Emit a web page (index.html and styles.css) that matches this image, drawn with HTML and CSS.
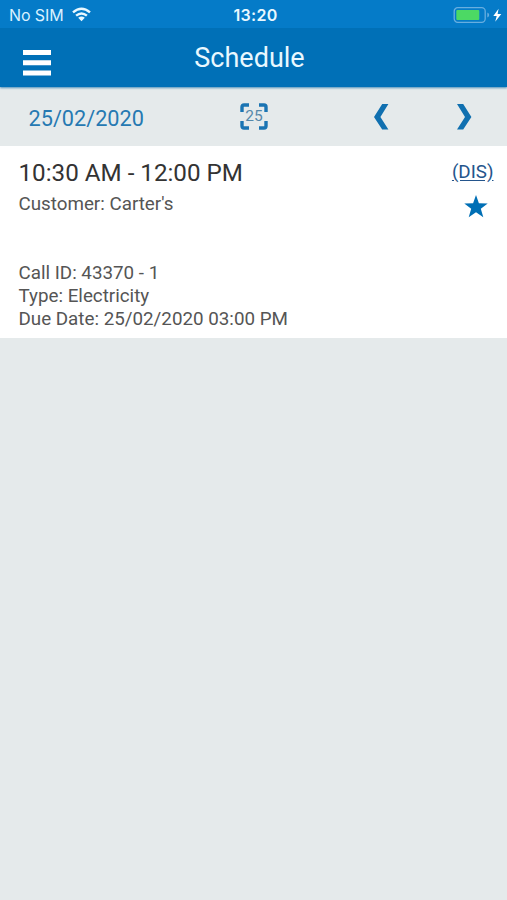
FILE: index.html
```html
<!DOCTYPE html>
<html lang="en">
<head>
<meta charset="utf-8">
<title>Schedule</title>
<link rel="stylesheet" href="styles.css">
</head>
<body>
<header class="header">
  <div class="status">
    <div class="carrier"><span>No SIM</span>
      <svg class="wifi" width="19" height="15" viewBox="0 0 19 15"><g fill="none" stroke="currentColor" stroke-width="2.4"><path d="M1 5.3Q9.5-2 18 5.3"/><path d="M4.1 8.7Q9.5 4.1 14.9 8.7"/></g><path fill="currentColor" d="M6.2 10.8Q9.5 8.3 12.8 10.8L9.5 14.2Z"/></svg>
    </div>
    <time class="clock">13:20</time>
    <svg class="battery" width="49" height="18" viewBox="0 0 49 18"><rect x="1.2" y="1.7" width="31" height="14.6" rx="3.5" fill="none" stroke="#68aee0" stroke-width="1.3"/><rect x="3.3" y="3.9" width="23" height="10.2" rx="1" fill="#4cd964"/><path d="M34.3 6.5Q36.2 7.2 36.2 9T34.3 11.5Z" fill="#68aee0"/><path d="M45.6 2.7 40.3 10H43.7L42.2 15.7 48.3 7.9H44.6Z" fill="#fff"/></svg>
  </div>
  <div class="titlebar">
    <svg class="menu" width="28" height="26" viewBox="0 0 28 26"><path d="M0 0h28v5H0zM0 10.2h28v5H0zM0 20.4h28v5H0z" fill="#fff"/></svg>
    <h1>Schedule</h1>
  </div>
</header>
<nav class="datebar">
  <span class="date">25/02/2020</span>
  <div class="today">
    <svg width="28" height="27" viewBox="0 0 28 27"><path d="M2 9V4Q2 2 4 2H9M19 2H24Q26 2 26 4V9M26 18V23Q26 25 24 25H19M9 25H4Q2 25 2 23V18" fill="none" stroke="#1a74b3" stroke-width="3.4"/></svg>
    <span>25</span>
  </div>
  <svg class="prev" width="15" height="26" viewBox="0 0 15 26"><path d="M8.2 0H14.4L6.4 13 14.4 25.5H8.2L0 13Z" fill="#1070b0"/></svg>
  <svg class="next" width="15" height="26" viewBox="0 0 15 26"><path d="M6.2 0H0L8 13 0 25.5H6.2L14.4 13Z" fill="#1070b0"/></svg>
</nav>
<main class="card">
  <div class="info">
    <h2>10:30 AM - 12:00 PM</h2>
    <p>Customer: Carter's</p>
    <div class="details"><p>Call ID: 43370 - 1</p><p>Type: Electricity</p><p>Due Date: 25/02/2020 03:00 PM</p></div>
  </div>
  <div class="side">
    <a class="status-code">(DIS)</a>
    <svg class="star" width="24" height="23" viewBox="0 0 24 23"><path d="M12 0 14.9 8.2 23.7 8.4 16.8 13.7 19.3 22.2 12 17.2 4.7 22.2 7.2 13.7.3 8.4 9.1 8.2Z" fill="#006fb5"/></svg>
  </div>
</main>
</body>
</html>
```
FILE: styles.css
```css
* { box-sizing: border-box; }
body { margin: 0; min-height: 900px; background: #e5eaeb; font-family: Roboto, sans-serif; }
svg { display: block; flex: none; }
h1, h2, p { margin: 0; font-weight: 400; }
.header { height: 87px; background: #0070b7; color: #e9f8ff; box-shadow: 0 1px 2px #4b90bb; position: relative; }
.status { height: 28px; background: #057bc8; display: grid; grid-template-columns: 1fr auto 1fr; align-items: center; padding: 1px 5px 0 9px; font: 16px/28px Inter, sans-serif; }
.carrier { display: flex; align-items: center; gap: 8px; color: #d9f1ff; }
.carrier span { letter-spacing: -0.1px; }
.wifi { color: #e9f8ff; margin-top: -2px; }
.clock { font-weight: 600; letter-spacing: 0.3px; }
.battery { justify-self: end; margin-top: -1px; }
.titlebar { height: 59px; display: grid; grid-template-columns: 1fr auto 1fr; padding: 0 31px 0 23px; }
.menu { margin-top: 22px; }
h1 { font-size: 27px; line-height: 61px; }
.datebar { height: 59px; display: flex; align-items: center; padding: 0 35px 0 28.5px; color: #2679b2; }
.date { width: 211.5px; font-size: 21.7px; line-height: 59px; padding-top: 3px; }
.today { display: grid; place-items: center; width: 28px; margin-right: 106px; }
.today > * { grid-area: 1 / 1; }
.today span { font-size: 15.5px; line-height: 27px; color: #5588aa; }
.prev { margin-right: auto; }
.card { height: 192px; background: #fff; display: flex; justify-content: space-between; padding: 12px 13.5px 0 18.5px; color: #555; font-size: 18.8px; line-height: 23px; }
h2 { font-size: 24.2px; line-height: 30px; color: #333; margin-bottom: 5px; }
.details { margin-top: 46px; }
.side { display: flex; flex-direction: column; align-items: flex-end; }
.status-code { color: #24558c; font-size: 18.8px; line-height: 29px; text-decoration: underline; text-underline-offset: 2px; }
.star { margin: 8px 5.5px 0 0; }
```
